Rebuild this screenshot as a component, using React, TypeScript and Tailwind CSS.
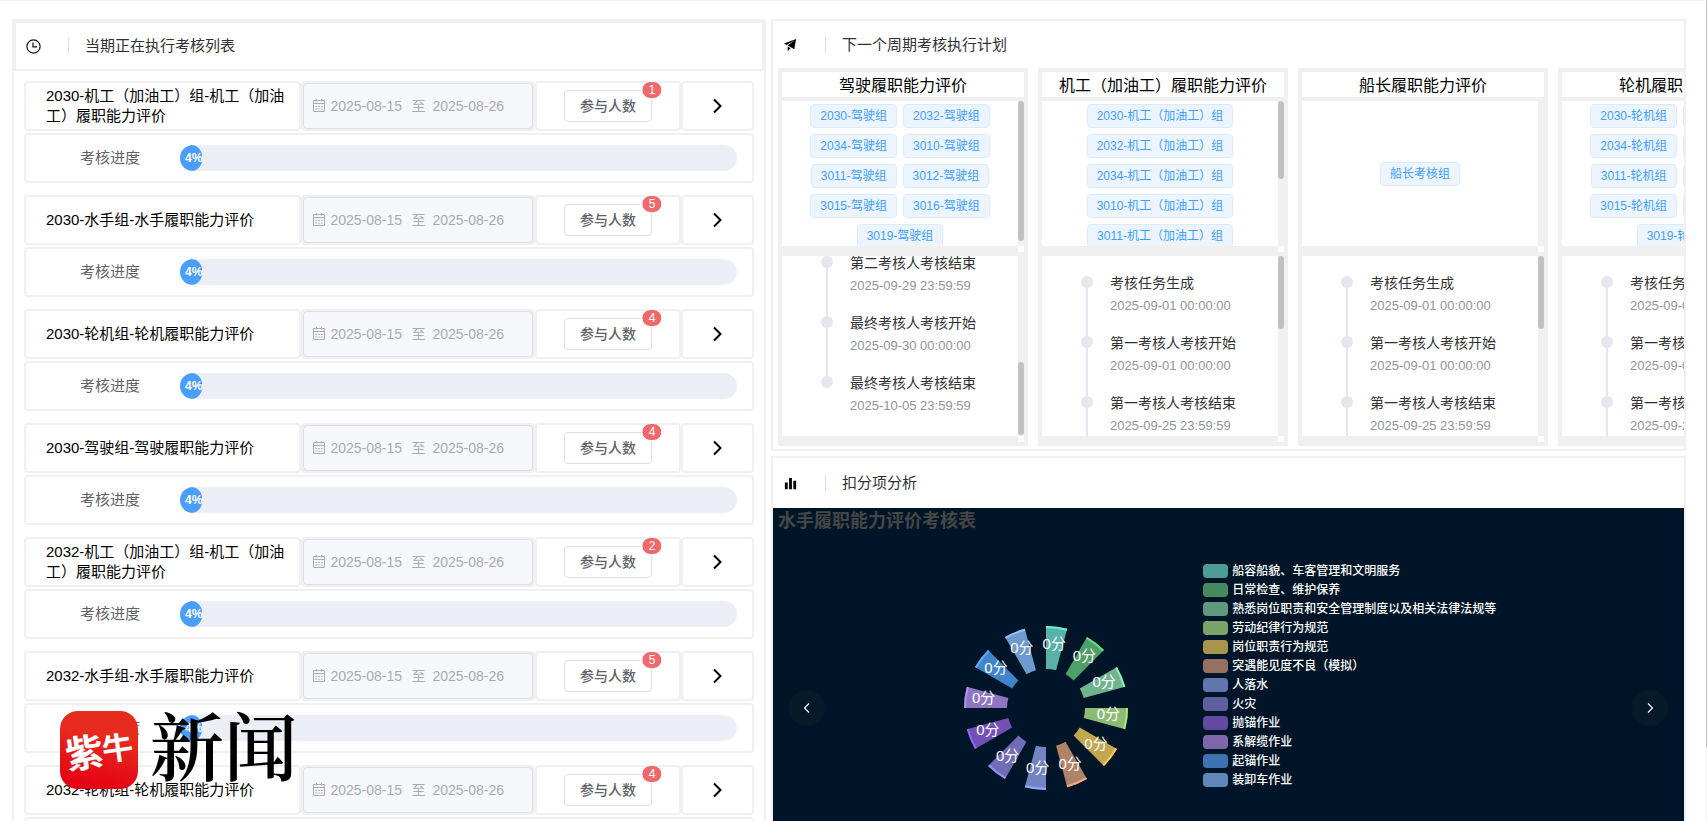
import type { ReactNode } from "react";

const assessments = [
  { name: "2030-机工（加油工）组-机工（加油工）履职能力评价", people: 1, progress: 4 },
  { name: "2030-水手组-水手履职能力评价", people: 5, progress: 4 },
  { name: "2030-轮机组-轮机履职能力评价", people: 4, progress: 4 },
  { name: "2030-驾驶组-驾驶履职能力评价", people: 4, progress: 4 },
  { name: "2032-机工（加油工）组-机工（加油工）履职能力评价", people: 2, progress: 4 },
  { name: "2032-水手组-水手履职能力评价", people: 5, progress: 4 },
  { name: "2032-轮机组-轮机履职能力评价", people: 4, progress: 4 },
];

const firstSteps = [
  { label: "考核任务生成", time: "2025-09-01 00:00:00" },
  { label: "第一考核人考核开始", time: "2025-09-01 00:00:00" },
  { label: "第一考核人考核结束", time: "2025-09-25 23:59:59" },
  { label: "第二考核人考核开始", time: "2025-09-26 00:00:00" },
];

const lastSteps = [
  { label: "第二考核人考核结束", time: "2025-09-29 23:59:59" },
  { label: "最终考核人考核开始", time: "2025-09-30 00:00:00" },
  { label: "最终考核人考核结束", time: "2025-10-05 23:59:59" },
];

type Plan = {
  title: string;
  groups: string[];
  steps: { label: string; time: string }[];
  groupThumb: string;
  scrolled?: boolean;
};

const plans: Plan[] = [
  {
    title: "驾驶履职能力评价",
    groups: ["2030", "2032", "2034", "3010", "3011", "3012", "3015", "3016", "3019"].map((n) => `${n}-驾驶组`),
    steps: lastSteps,
    groupThumb: "h-[140px]",
    scrolled: true,
  },
  {
    title: "机工（加油工）履职能力评价",
    groups: ["2030", "2032", "2034", "3010", "3011"].map((n) => `${n}-机工（加油工）组`),
    steps: firstSteps,
    groupThumb: "h-[78px]",
  },
  { title: "船长履职能力评价", groups: ["船长考核组"], steps: firstSteps, groupThumb: "h-0" },
  {
    title: "轮机履职能力评价",
    groups: ["2030", "2032", "2034", "3010", "3011", "3012", "3015", "3016", "3019"].map((n) => `${n}-轮机组`),
    steps: firstSteps,
    groupThumb: "h-[140px]",
  },
];

const deductions = [
  { name: "船容船貌、车客管理和文明服务", fill: "#59b2aa", edge: "#62f0d8", legend: "#4f9b98" },
  { name: "日常检查、维护保养", fill: "#4f9f69", edge: "#5de28c", legend: "#458a5f" },
  { name: "熟悉岗位职责和安全管理制度以及相关法律法规等", fill: "#70b38e", edge: "#8af0b8", legend: "#61997e" },
  { name: "劳动纪律行为规范", fill: "#8dbb76", edge: "#a5e57e", legend: "#7aa369" },
  { name: "岗位职责行为规范", fill: "#c0a750", edge: "#ffc850", legend: "#a9954e" },
  { name: "突遇能见度不良（模拟）", fill: "#b08268", edge: "#f5ad80", legend: "#947160" },
  { name: "人落水", fill: "#7284c2", edge: "#8fabff", legend: "#6376ab" },
  { name: "火灾", fill: "#716db4", edge: "#958ff5", legend: "#615f9d" },
  { name: "抛锚作业", fill: "#7250b6", edge: "#8f66f5", legend: "#6249a2" },
  { name: "系解缆作业", fill: "#8f75c2", edge: "#b48df5", legend: "#7d66aa" },
  { name: "起锚作业", fill: "#4284c9", edge: "#55adff", legend: "#3c73b0" },
  { name: "装卸车作业", fill: "#6e9acd", edge: "#87c4ff", legend: "#5f88b8" },
];

function ClockIcon() {
  return (
    <svg viewBox="0 0 15 15" className="size-[15px]" fill="none" stroke="#111" strokeWidth="1.2">
      <circle cx="7.5" cy="7.5" r="6.6" />
      <path d="M7 3.6v4.3h4" />
    </svg>
  );
}

function PlaneIcon() {
  return (
    <svg viewBox="0 0 1024 1024" className="size-[15px]" fill="#000">
      <path d="m64 448 832-320-128 704-446.08-243.328L832 192 242.816 545.536zm256 512V657.024L512 768z" />
    </svg>
  );
}

function BarsIcon() {
  return (
    <svg viewBox="0 0 1024 1024" className="size-[15px]" fill="#000">
      <path d="M416 896V128h192v768zm-288 0V448h192v448zm576 0V320h192v576z" />
    </svg>
  );
}

function CalendarIcon() {
  return (
    <svg viewBox="0 0 14 14" className="size-[14px] shrink-0" fill="none" stroke="#a8abb2">
      <path d="M1.5 1.5h11v11h-11zM1.5 4.5h11M4.5 0v2.5M9.5 0v2.5" />
      <path d="M3.5 7.5h7M3.5 10h7" strokeDasharray="1.6 1.1" />
    </svg>
  );
}

function PanelHeader({ icon, title, className }: { icon: ReactNode; title: string; className: string }) {
  return (
    <header className={`flex items-center ${className}`}>
      <span className="flex w-[15px] justify-center">{icon}</span>
      <span className="ml-[27px] h-4 w-px bg-[#dcdfe6]" />
      <h2 className="ml-4 text-[15px] leading-5 text-[#303133]">{title}</h2>
    </header>
  );
}

function AssessmentItem({ item, index }: { item: (typeof assessments)[number]; index: number }) {
  return (
    <li className="flex flex-col gap-[2px]">
      <div className="grid h-[50px] grid-cols-[38fr_32fr_20fr_10fr]">
        <div className="flex items-center rounded border-2 border-[#f0f0f0] pl-5 pr-2 text-[15px] leading-5 text-black">
          {item.name}
        </div>
        <div className="rounded border-2 border-[#f0f0f0] bg-[#f0f0f0]">
          <div className="flex h-full items-center rounded border border-[#dcdfe6] bg-[#f5f7fa] pl-2 text-sm text-[#a8abb2]">
            <CalendarIcon />
            <input
              aria-label={`开始日期 ${index + 1}`}
              className="ml-1 w-[74px] bg-transparent"
              defaultValue="2025-08-15"
              disabled
            />
            <span className="w-7 text-center">至</span>
            <input
              aria-label={`结束日期 ${index + 1}`}
              className="w-[74px] bg-transparent"
              defaultValue="2025-08-26"
              disabled
            />
          </div>
        </div>
        <div className="flex items-center justify-center rounded border-2 border-[#f0f0f0]">
          <div className="relative">
            <button
              type="button"
              className="h-8 rounded border border-[#dcdfe6] bg-white px-[15px] text-sm font-medium text-[#606266]"
            >
              参与人数
            </button>
            <sup className="absolute right-0 top-0 flex h-[18px] -translate-y-1/2 translate-x-1/2 items-center rounded-full border border-white bg-[#f0686a] px-[6px] text-xs font-medium text-white">
              {item.people}
            </sup>
          </div>
        </div>
        <button
          type="button"
          aria-label="查看详情"
          className="flex items-center justify-center rounded border-2 border-[#f0f0f0]"
        >
          <svg viewBox="0 0 16 16" className="size-4" fill="none" stroke="#000" strokeWidth="2">
            <path d="M4 1.5 10.5 8 4 14.5" />
          </svg>
        </button>
      </div>
      <div className="flex h-[50px] items-center rounded border-2 border-[#f0f0f0] pl-[54px] pr-[15px]">
        <span className="w-[100px] text-[15px] text-[#606266]">考核进度</span>
        <div
          role="progressbar"
          aria-label={`${item.name} 考核进度`}
          aria-valuenow={item.progress}
          className="h-[26px] flex-1 overflow-hidden rounded-full bg-[#ebeef5]"
        >
          <div
            className="flex h-full items-center overflow-hidden rounded-full bg-[#4a9eff] pl-[5px] text-xs font-bold text-white"
            style={{ width: `${item.progress}%` }}
          >
            {item.progress}%
          </div>
        </div>
      </div>
    </li>
  );
}

function ScrollBox({
  children,
  thumb,
  atEnd = false,
  className,
}: {
  children: ReactNode;
  thumb: string;
  atEnd?: boolean;
  className: string;
}) {
  return (
    <div className={`flex flex-col ${className}`}>
      <div className="flex min-h-0 flex-1">
        <div className="min-w-0 flex-1 overflow-hidden bg-white">{children}</div>
        <div className={`flex w-[6px] flex-col ${atEnd ? "justify-end pb-px" : ""}`}>
          <div className={`rounded-full bg-[#c1c1c1] ${thumb}`} />
        </div>
      </div>
      <div className="flex h-[6px] justify-end">
        <div className="w-[6px] bg-white" />
      </div>
    </div>
  );
}

function PlanCard({ plan }: { plan: Plan }) {
  return (
    <article className="flex w-[250px] shrink-0 flex-col gap-1 bg-[#f0f0f0] p-1">
      <h3 className="h-[25px] bg-white text-center text-base leading-[27px] text-black">{plan.title}</h3>
      <ScrollBox thumb={plan.groupThumb} className="h-[151px]">
        <div
          className={`flex flex-wrap justify-center gap-[6px] py-[3px] ${
            plan.groups.length === 1 ? "h-full content-center" : ""
          }`}
        >
          {plan.groups.map((group) => (
            <span
              key={group}
              className="h-6 rounded border border-[#d9ecff] bg-[#ecf5ff] px-[9px] text-xs leading-[22px] text-[#409eff]"
            >
              {group}
            </span>
          ))}
        </div>
      </ScrollBox>
      <ScrollBox thumb="h-[73px]" atEnd={plan.scrolled} className="h-[186px]">
        <ul className={`pl-[39px] ${plan.scrolled ? "" : "pt-5"}`}>
          {plan.steps.map((step, i) => (
            <li key={step.label} className="flex h-[60px] gap-[17px]">
              <div className="flex w-3 flex-col items-center">
                <span className="size-3 shrink-0 rounded-full bg-[#e4e7ed]" />
                {i < plan.steps.length - 1 && <span className="w-[2px] flex-1 bg-[#e4e7ed]" />}
              </div>
              <div>
                <p className="text-sm leading-[14px] text-[#303133]">{step.label}</p>
                <p className="mt-2 text-[13px] leading-4 text-[#909399]">{step.time}</p>
              </div>
            </li>
          ))}
        </ul>
      </ScrollBox>
    </article>
  );
}

function point(radius: number, degrees: number) {
  const a = (degrees * Math.PI) / 180;
  return `${(radius * Math.sin(a)).toFixed(2)} ${(-radius * Math.cos(a)).toFixed(2)}`;
}

function ring(inner: number, outer: number, from: number, to: number) {
  return `M${point(inner, from)}L${point(outer, from)}A${outer} ${outer} 0 0 1 ${point(outer, to)}L${point(inner, to)}A${inner} ${inner} 0 0 0 ${point(inner, from)}Z`;
}

function RoseChart() {
  const step = 360 / deductions.length;
  return (
    <svg viewBox="-90 -90 180 180" className="size-[180px] shrink-0">
      {deductions.map((d, i) => (
        <g key={d.name}>
          <path d={ring(39, 82, i * step, i * step + 15)} fill={d.fill} />
          <path d={ring(80, 82, i * step, i * step + 15)} fill={d.edge} />
        </g>
      ))}
      {deductions.map((d, i) => {
        const [x, y] = point(63, i * step + 7.5).split(" ").map(Number);
        return (
          <text key={d.name} x={x} y={y + 3} fill="#fff" fontSize="15" textAnchor="middle">
            0分
          </text>
        );
      })}
    </svg>
  );
}

function CarouselArrow({ label, side, d }: { label: string; side: string; d: string }) {
  return (
    <button
      type="button"
      aria-label={label}
      className={`absolute top-1/2 flex size-9 -translate-y-1/2 items-center justify-center rounded-full bg-[#061a2a] ${side}`}
    >
      <svg viewBox="0 0 12 12" className="size-3" fill="none" stroke="#fff" strokeWidth="1.1">
        <path d={d} />
      </svg>
    </button>
  );
}

function DeductionChart() {
  return (
    <div className="relative flex h-[400px] items-center bg-[#001628]">
      <h3 className="absolute left-[5px] top-0 text-lg font-bold leading-[26px] text-[#464646]">
        水手履职能力评价考核表
      </h3>
      <div className="flex w-[47%] justify-center pl-[13%]">
        <RoseChart />
      </div>
      <ul className="mt-14 flex flex-col gap-[5px] self-start pl-[2px]">
        {deductions.map((d) => (
          <li key={d.name} className="flex h-[14px] items-center gap-1 text-xs font-medium leading-[14px] text-white">
            <span className="h-[14px] w-[25px] rounded" style={{ backgroundColor: d.legend }} />
            {d.name}
          </li>
        ))}
      </ul>
      <CarouselArrow label="上一张" side="left-4" d="M8 1.5 3.5 6 8 10.5" />
      <CarouselArrow label="下一张" side="right-4" d="M4 1.5 8.5 6 4 10.5" />
    </div>
  );
}

function Watermark() {
  return (
    <div className="pointer-events-none absolute left-[60px] top-[711px] flex items-center gap-3">
      <svg viewBox="0 0 78 78" className="size-[78px]">
        <defs>
          <linearGradient id="badge" x1="0.6" y1="0" x2="0.4" y2="1">
            <stop offset="0.3" stopColor="#e62b1f" />
            <stop offset="1" stopColor="#e60012" />
          </linearGradient>
        </defs>
        <rect width="78" height="78" rx="18" fill="url(#badge)" />
        <g fill="#fff" fontWeight="700" transform="rotate(-8 39 39)">
          <text x="5" y="54" fontSize="38">
            紫
          </text>
          <text x="42" y="51" fontSize="31">
            牛
          </text>
        </g>
      </svg>
      <span className="font-['Liberation_Serif','Noto_Serif_CJK_SC','Noto_Sans_CJK_SC',serif] text-[74px] font-semibold leading-[78px] text-black">
        新闻
      </span>
    </div>
  );
}

export default function App() {
  return (
    <div className="relative flex h-screen overflow-hidden bg-white font-['Liberation_Sans','Noto_Sans_CJK_SC',sans-serif]">
      <main className="grid min-w-0 flex-1 grid-cols-[minmax(0,754fr)_minmax(0,915fr)] items-start gap-[5px] border-t border-[#f0f0f0] pl-3 pr-5 pt-[18px]">
        <section className="border-2 border-[#f0f0f0]">
          <PanelHeader
            icon={<ClockIcon />}
            title="当期正在执行考核列表"
            className="h-[50px] border-2 border-[#f0f0f0] pl-[10px]"
          />
          <ul className="flex flex-col gap-3 p-[10px]">
            {assessments.map((item, i) => (
              <AssessmentItem key={item.name} item={item} index={i} />
            ))}
          </ul>
        </section>

        <div className="flex flex-col gap-[5px]">
          <section className="border-2 border-[#f0f0f0]">
            <PanelHeader icon={<PlaneIcon />} title="下一个周期考核执行计划" className="h-[47px] pl-[10px]" />
            <div className="flex gap-[10px] overflow-hidden pb-[3px] pl-[5px]">
              {plans.map((plan) => (
                <PlanCard key={plan.title} plan={plan} />
              ))}
            </div>
          </section>

          <section className="border-2 border-[#f0f0f0]">
            <PanelHeader icon={<BarsIcon />} title="扣分项分析" className="h-[50px] pl-[10px]" />
            <DeductionChart />
          </section>
        </div>
      </main>

      {/* Page scrollbar */}
      <div className="w-px bg-[#f1f1f1]">
        <div className="h-[91%] bg-[#c1c1c1]" />
      </div>

      <Watermark />
    </div>
  );
}
